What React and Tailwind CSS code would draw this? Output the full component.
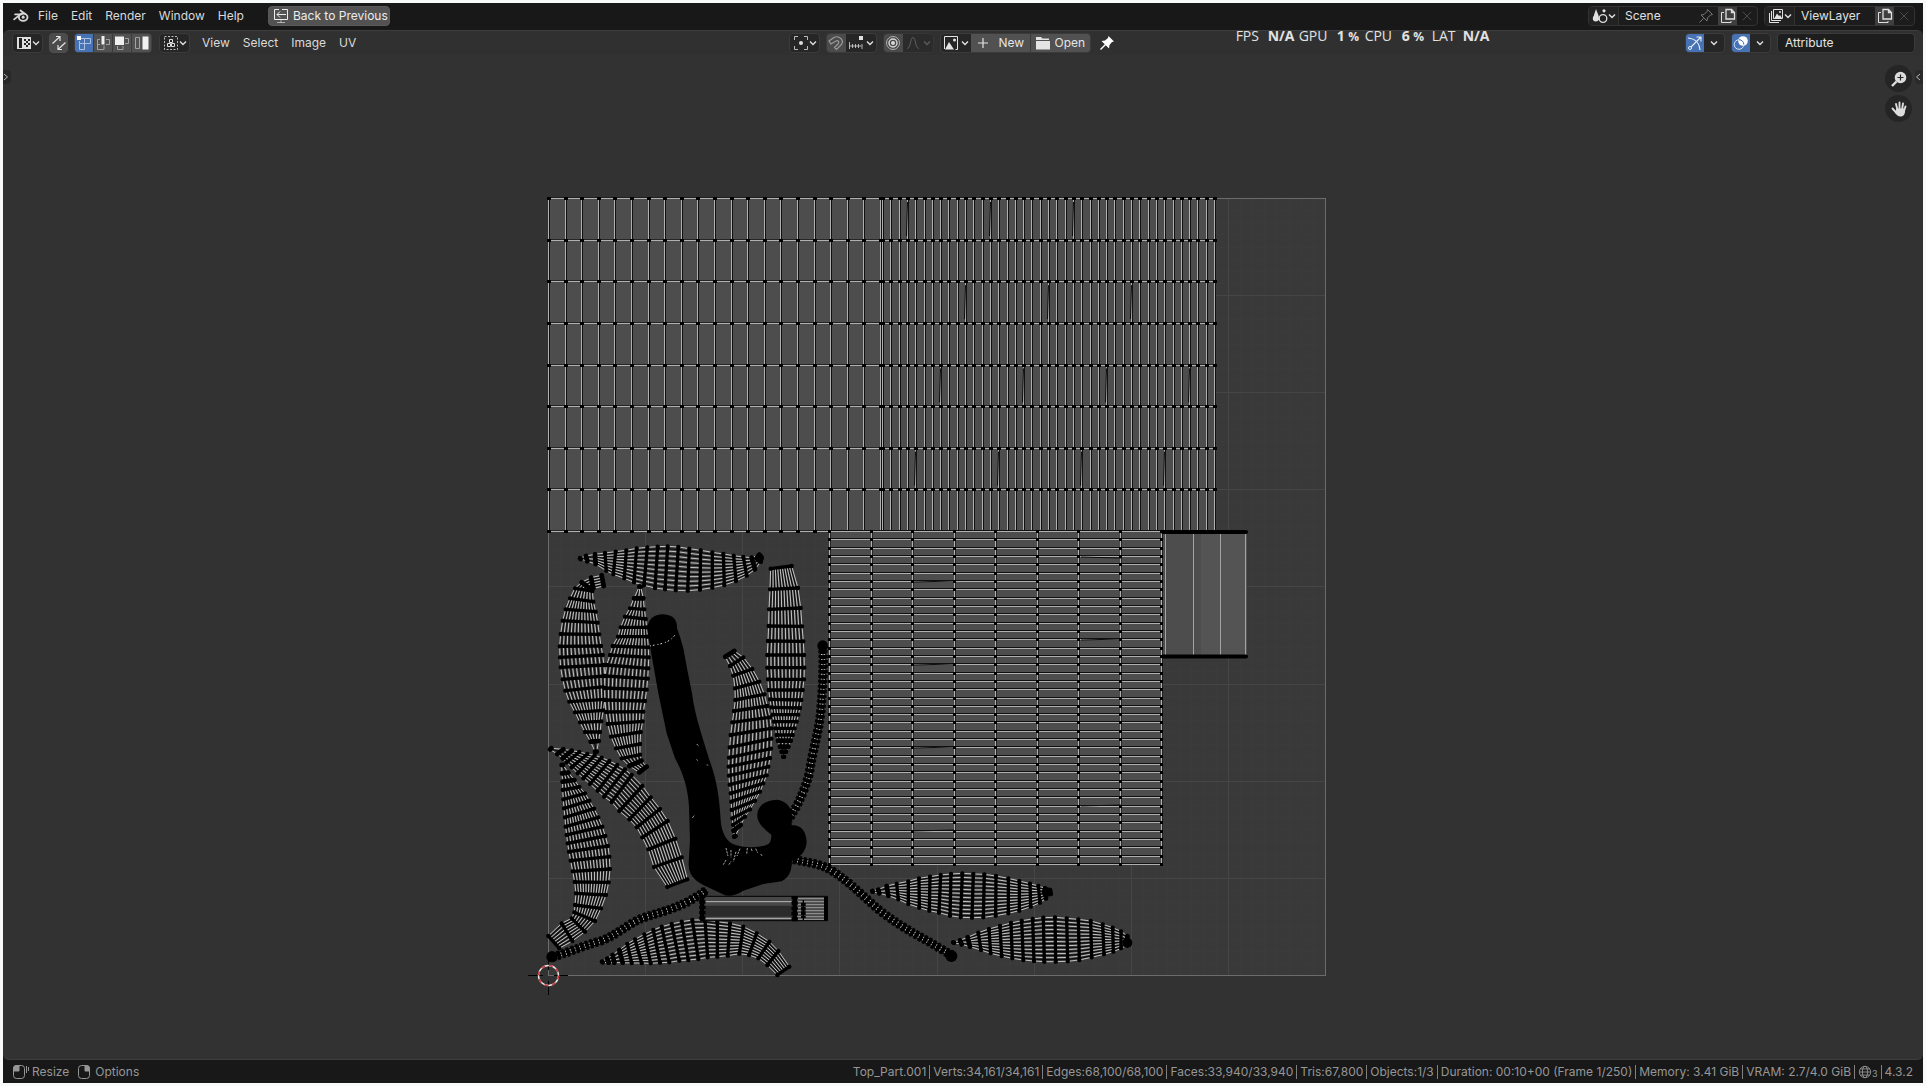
import React from "react";

/* ---------- UV mesh data: each leaf is a list of cross ribs [x1, y1, x2, y2] ---------- */

const LEAVES = [
  { dx: 0, dy: 0, n: 9, ribs: [[150,115,152,117],[168,108,172,124],[195,103,197,132],[225,99,229,152],[257,95,250,163],[289,91,283,175],[320,85,312,187],[352,82,342,196],[383,80,375,204],[413,79,405,208],[445,81,437,211],[478,86,473,212],[512,91,510,209],[547,97,547,203],[580,102,583,195],[611,107,618,183],[640,111,650,167],[665,113,675,148],[688,104,692,125]] },
  { dx: 0, dy: 0, n: 11, ribs: [[215,166,221,198],[183,173,190,205],[155,187,184,208],[135,205,187,213],[120,235,190,245],[107,268,197,275],[98,302,203,308],[92,342,208,343],[89,379,213,378],[90,412,218,405],[92,442,222,435],[98,478,224,468],[106,512,225,500],[118,545,225,538],[135,577,220,571],[150,607,214,604],[165,636,210,636],[182,665,206,663],[195,695,200,695]] },
  { dx: 0, dy: 0, n: 11, ribs: [[328,200,332,200],[312,235,340,235],[300,265,343,268],[285,290,347,297],[272,322,350,322],[264,350,352,350],[248,378,355,382],[240,405,356,412],[230,435,355,445],[225,468,353,476],[224,504,350,509],[225,540,345,543],[228,576,340,575],[233,612,338,604],[243,650,332,636],[258,685,330,672],[275,715,330,704],[298,738,334,722],[328,757,350,740]] },
  { dx: 0, dy: 0, n: 10, ribs: [[722,146,785,138],[720,208,804,204],[717,268,812,264],[716,318,816,319],[714,363,820,364],[712,405,822,405],[712,443,823,443],[714,478,822,478],[716,510,818,510],[720,538,814,540],[724,562,810,564],[728,584,805,584],[732,605,800,605],[736,625,794,625],[740,645,788,645],[744,662,782,662],[750,680,775,680],[755,695,768,695],[760,710,762,710]] },
  { dx: 0, dy: 0, n: 11, ribs: [[586,410,613,393],[600,438,640,412],[610,467,667,447],[615,505,688,485],[616,540,703,523],[612,573,712,558],[607,607,720,592],[602,645,724,625],[599,682,724,656],[597,713,723,686],[596,740,720,714],[597,767,715,740],[599,794,710,766],[602,820,700,790],[604,845,690,815],[605,870,675,842],[607,895,660,868],[609,915,645,890],[611,932,632,915],[613,950,616,948]] },
  { dx: 0, dy: 660, n: 10, ribs: [[60,28,64,25],[82,42,100,28],[98,55,125,32],[110,67,148,36],[125,82,172,42],[143,100,194,46],[160,115,215,53],[180,132,238,63],[203,152,262,75],[222,170,285,88],[245,186,305,105],[268,213,337,138],[298,238,362,172],[320,262,390,207],[337,292,413,243],[355,328,436,296],[372,381,455,352],[412,441,472,418]] },
  { dx: 0, dy: 660, n: 12, ribs: [[95,75,99,75],[96,100,115,98],[98,125,133,120],[98,150,148,141],[100,178,165,160],[102,205,178,182],[105,232,192,206],[107,260,205,232],[110,285,217,260],[113,310,226,288],[117,335,234,318],[122,362,238,350],[128,394,240,387],[134,426,236,427],[138,460,228,465],[135,495,213,505],[133,517,195,543],[125,535,165,575],[95,550,127,603],[55,588,88,625]] },
  { dx: 0, dy: 660, n: 10, ribs: [[216,665,218,667],[232,656,236,668],[248,645,253,668],[268,630,278,668],[292,612,305,669],[315,598,335,669],[343,583,362,670],[370,570,390,668],[395,560,418,667],[425,552,448,662],[455,545,475,660],[487,540,505,657],[525,540,533,652],[562,545,562,650],[600,550,593,647],[640,560,628,641],[680,580,657,645],[718,605,685,655],[745,633,712,675],[778,680,742,705]] },
  { dx: 870, dy: 660, n: 11, ribs: [[157,453,158,455],[175,449,178,460],[200,438,205,467],[230,431,235,478],[265,424,265,492],[297,415,298,503],[330,410,328,512],[362,405,357,518],[393,402,390,527],[427,400,422,532],[460,402,456,533],[493,403,490,532],[528,408,527,527],[565,415,565,520],[598,423,598,512],[630,431,632,500],[655,438,660,488],[675,445,678,475],[690,450,692,462]] },
  { dx: 870, dy: 660, n: 11, ribs: [[400,607,402,608],[420,601,425,613],[443,592,450,620],[475,578,483,630],[507,567,512,640],[540,558,545,648],[573,549,577,655],[605,542,610,660],[638,537,642,663],[670,533,673,665],[705,532,707,665],[740,535,743,664],[775,538,778,660],[812,543,815,652],[848,553,852,643],[878,563,880,635],[903,574,903,625],[922,588,922,616]] },
];

const VINES = [
  "M67,1311 C110,1300 150,1280 215,1262 C270,1240 300,1205 350,1190 C420,1168 460,1160 530,1110",
  "M878,375 C882,440 878,500 872,580 C865,640 848,690 838,760 C818,830 800,860 775,900",
  "M790,1018 C840,1030 870,1030 905,1052 C950,1080 980,1110 1030,1155 C1080,1200 1150,1240 1180,1256 C1210,1272 1240,1292 1265,1305",
];

const range = (n) => Array.from({ length: n }, (_, i) => i);
const mix = (a, b, t) => a + (b - a) * t;
const r1 = (v) => Math.round(v * 10) / 10;
const ribLength = (r) => Math.hypot(r[2] - r[0], r[3] - r[1]);

function Leaf({ ribs, dx, dy, n }) {
  const outline =
    "M" + ribs.map((r) => `${r[0]},${r[1]}`).join("L") + "L" + [...ribs].reverse().map((r) => `${r[2]},${r[3]}`).join("L") + "Z";
  let light = "";
  let dark = "";
  for (let i = 0; i < ribs.length - 1; i++) {
    const a = ribs[i];
    const b = ribs[i + 1];
    const count = Math.max(1, Math.min(n, Math.floor((ribLength(a) + ribLength(b)) / 2 / 8)));
    for (let k = 0; k <= count; k++) {
      const seg = (t) => `M${r1(mix(a[0], a[2], t))},${r1(mix(a[1], a[3], t))}L${r1(mix(b[0], b[2], t))},${r1(mix(b[1], b[3], t))}`;
      light += seg(k / count);
      if (k < count) dark += seg((k + 0.5) / count);
    }
  }
  const line = (r) => `M${r[0]},${r[1]}L${r[2]},${r[3]}`;
  const cross = ribs.map(line).join("");
  const tips = ribs.filter((r) => ribLength(r) < 40).map(line).join("");
  const dots = ribs.map((r) => `M${r[0]},${r[1]}h.1M${r[2]},${r[3]}h.1`).join("");
  return (
    <g transform={`translate(${dx} ${dy})`} fill="none" strokeLinecap="round">
      <path d={outline} fill="#3c3c3c" />
      <path d={dark} stroke="#0c0c0c" strokeWidth="3.6" />
      <path d={light} stroke="#c4c4c4" strokeWidth="3" />
      <path d={cross} stroke="#000" strokeWidth="10" />
      <path d={tips} stroke="#000" strokeWidth="14" />
      <path d={dots} stroke="#000" strokeWidth="13" />
    </g>
  );
}

function Sheet({ x, y, w, h, cols, rows, tall }) {
  const xs = range(cols + 1).map((i) => Math.round(x + (w * i) / cols));
  const ys = range(rows + 1).map((i) => Math.round(y + (h * i) / rows));
  const vLines = xs.map((v) => `M${v + 0.5},${y}V${y + h}`).join("");
  const hLines = ys.map((v) => `M${x},${v + 0.5}H${x + w}`).join("");
  const vDark = xs.map((v) => `M${v + 1.5},${y}V${y + h}`).join("");
  const hDark = ys.map((v) => `M${x},${v - 0.5}H${x + w}`).join("");
  let dots = "";
  xs.forEach((a) => ys.forEach((b) => { dots += tall ? `M${a - 1},${b - 1}h4v3h-4z` : `M${a - 1},${b - 1}h3v3h-3z`; }));
  return (
    <g fill="none">
      <rect x={x} y={y} width={w} height={h} fill="#4d4d4d" />
      <path d={tall ? vDark : hDark} stroke="#111" />
      <path d={tall ? hDark : vDark} stroke="#1d1d1d" opacity="0.8" />
      <path d={vLines} stroke="#b0b0b0" />
      <path d={hLines} stroke="#b0b0b0" />
      <path d={dots} fill="#000" />
    </g>
  );
}

function UvCanvas() {
  const slivers = [[907,0],[990,0],[1073,0],[965,2],[1048,2],[1131,2],[940,4],[1023,4],[1106,4],[1189,4],[915,6],[998,6],[1081,6],[1164,6]];
  return (
    <svg className="h-full w-full" viewBox="3 55 1920 1004" preserveAspectRatio="xMidYMid meet" role="img" aria-label="UV layout">
      <rect x="548" y="198" width="777" height="777" fill="#393939" />
      <path d={range(63).map((i) => { const p = Math.round(((i + 1) * 777) / 64); return `M${548 + p + 0.5},198v777M548,${975 - p + 0.5}h777`; }).join("")} stroke="#3b3b3b" fill="none" />
      <path d={range(7).map((i) => { const p = Math.round(((i + 1) * 777) / 8); return `M${548 + p + 0.5},198v777M548,${975 - p + 0.5}h777`; }).join("")} stroke="#464646" fill="none" />
      <rect x="548.5" y="198.5" width="777" height="777" fill="none" stroke="#6c6c6c" />

      <Sheet x={548} y={198} w={332} h={333} cols={20} rows={8} tall />
      <Sheet x={882} y={198} w={332} h={333} cols={40} rows={8} tall />
      <path d={slivers.map(([a, r]) => `M${a + 0.5},${202 + r * 41.6}l-1,34`).join("")} stroke="#0a0a0a" fill="none" />
      <Sheet x={829} y={531} w={332} h={333} cols={8} rows={40} />
      <path d="M914,582l40,-1M1081,557l40,1M914,748l40,-1M1081,806l40,-1M914,831l40,-1M1081,640l40,-1M914,665l40,-1" stroke="#0c0c0c" fill="none" />

      <g fill="none">
        <path d="M1163,532h84v125h-84z" fill="#4d4d4d" />
        <path d="M1201,532h46v125h-46z" fill="#545454" />
        <path d="M1165.500,532v125M1193.500,532v125M1220.500,532v125M1245.500,532v125" stroke="#a3a3a3" />
        <path d="M1163,532H1246M1163,656.500H1246" stroke="#000" strokeWidth="4" strokeLinecap="round" />
      </g>

      <g transform="translate(530 520) scale(0.33333)">
        {LEAVES.map((leaf, i) => <Leaf key={i} {...leaf} />)}
        <g fill="none" strokeLinecap="butt">
          {VINES.map((d, i) => (
            <g key={i}>
              <path d={d} stroke="#000" strokeWidth="20" />
              <path d={d} stroke="#000" strokeWidth="28" strokeDasharray="9 6" />
              <path d={d} stroke="#d0d0d0" strokeWidth="13" strokeDasharray="2.4 12.6" strokeDashoffset="3" />
              <path d={d} stroke="#000" strokeWidth="3" />
            </g>
          ))}
        </g>
        <circle cx="66" cy="1310" r="17" />
        <circle cx="878" cy="377" r="16" />
        <circle cx="1264" cy="1308" r="18" />
        <circle cx="688" cy="114" r="14" />
        <circle cx="1550" cy="1117" r="15" />
        <circle cx="1792" cy="1268" r="15" />

        {/* main stem */}
        <path d="M352,330 C352,300 370,283 400,283 C430,285 442,300 441,325 L450,350 L460,385 L472,450 L486,520 C495,590 520,660 540,725 C560,780 568,830 572,900 C574,940 592,965 610,973 C640,985 700,985 718,970 C724,960 724,952 724,944 C705,930 683,910 682,890 C680,860 705,840 740,839 C765,841 785,860 785,885 L785,916 C810,914 828,930 830,965 C829,990 815,1010 786,1022 C785,1050 780,1070 755,1084 L700,1092 L640,1112 C620,1125 600,1130 585,1126 L520,1095 C490,1080 475,1060 476,1030 L480,960 L477,860 C474,800 455,750 435,715 L410,640 L385,520 L362,390 Z" />
        <path d="M360,378 C385,372 415,372 434,346" stroke="#d8d8d8" strokeWidth="3" fill="none" strokeDasharray="3 6 5 9" />
        <path d="M588,984l6,24M603,990l0,22M618,995l-8,30M630,986l-9,22M652,984l-2,20M664,986l3,10M677,986l6,12M580,1034l8,-14M597,1034l6,-10M692,1002l6,8M487,894l7,-9M500,672l6,6M500,718l3,4M531,733l3,4" stroke="#bdbdbd" strokeWidth="2.6" fill="none" strokeDasharray="7 3" />

        {/* banded strip */}
        <g fill="none">
          <path d="M512,1129H892V1202H512Z" fill="#484848" stroke="#000" strokeWidth="3" />
          <path d="M524,1157H786V1190H524Z" fill="#2b2b2b" />
          <path d="M524,1145H786M524,1195H786" stroke="#b9b9b9" strokeWidth="3" />
          <path d="M802,1136H882M802,1145H882M802,1154H882M802,1163H882M802,1172H882M802,1181H882M802,1190H882M802,1198H882" stroke="#9c9c9c" strokeWidth="3" />
          <path d="M517,1130V1202M888,1130V1202" stroke="#000" strokeWidth="12" />
          <path d="M794,1128V1204" stroke="#000" strokeWidth="14" />
          <path d="M820,1148V1194" stroke="#000" strokeWidth="14" strokeDasharray="11 2" />
          <path d="M820,1140V1200" stroke="#000" strokeWidth="4" />
          <path d="M517,1125V1204M794,1128V1204" stroke="#000" strokeWidth="19" strokeDasharray="10 6" />
        </g>
      </g>

      {/* 2D cursor */}
      <g fill="none">
        <path d="M528,975.500h15M554,975.500h14M548.500,955v15M548.500,981v14" stroke="#000" />
        <circle cx="548.500" cy="975.500" r="10" stroke="#e8e8e8" strokeWidth="1.400" />
        <circle cx="548.500" cy="975.500" r="10" stroke="#c8373a" strokeWidth="1.600" strokeDasharray="3.930 3.930" />
      </g>
    </svg>
  );
}

/* ---------- icons ---------- */

function Ico({ children, className = "size-4" }) {
  return (
    <svg viewBox="0 0 16 16" className={`${className} shrink-0`} fill="none" stroke="currentColor" strokeWidth="1" aria-hidden="true">
      {children}
    </svg>
  );
}
const Chevron = () => (
  <svg viewBox="0 0 8 8" className="size-2 shrink-0" fill="none" stroke="currentColor" strokeWidth="1.4" aria-hidden="true">
    <path d="M1 2.500 4 5.500 7 2.500" />
  </svg>
);
const BlenderLogo = () => (
  <svg viewBox="0 0 17 14" className="h-3.5 w-4 shrink-0" fill="none" stroke="#d6d6d6" aria-hidden="true">
    <path d="M1.200 10.600 8.600 4.700M2.200 5.200H9M8 1.200 12 4.400" strokeWidth="1.900" strokeLinecap="round" />
    <ellipse cx="10.800" cy="8.300" rx="4.600" ry="3.900" strokeWidth="2" />
    <circle cx="10.800" cy="8.200" r="1.600" fill="#d6d6d6" stroke="none" />
  </svg>
);
const CopyIcon = () => (
  <Ico>
    <path d="M6 1.500h5.500l3 3V11H6z M11.500 1.500v3h3" strokeWidth="1.300" />
    <path d="M4 4.500H1.500v10H11V13" />
  </Ico>
);
const XIcon = () => <Ico className="size-3"><path d="M2.500 2.500l11 11M13.500 2.500l-11 11" strokeWidth="1.300" /></Ico>;

/* ---------- controls ---------- */

function DropIcon({ label, children }) {
  return (
    <button aria-label={label} className="flex h-5 w-[31px] items-center justify-between rounded border border-[#3b3b3b] bg-[#262626] pr-0.5 pl-[3px] text-[#dedede]">
      {children}
      <Chevron />
    </button>
  );
}
const MenuItem = ({ children }) => <button className="text-[#dadada]">{children}</button>;

function DataBlock({ label, value, icon, pin, inputClass }) {
  return (
    <div className="flex h-5 overflow-hidden rounded border border-[#333] bg-[#1c1c1c] text-[#e0e0e0]">
      <button aria-label={`Browse ${label}`} className="flex w-[30px] items-center justify-between border-r border-[#333] bg-[#222] pr-1 pl-[3px]">
        {icon}
        <Chevron />
      </button>
      <input aria-label={label} defaultValue={value} className={`${inputClass} bg-transparent pl-1.5 outline-none`} />
      {pin && (
        <button aria-label="Pin scene" className="flex w-6 items-center justify-center text-[#777]">
          <Ico><path d="M9.500 1.500 14.500 6.500 12.500 7 9.500 10 9 13 3 7 6 6.500 9 3.500zM5.500 10.500 1.500 14.500" /></Ico>
        </button>
      )}
      <button aria-label={`New ${label}`} className="flex w-[19px] items-center justify-center bg-[#3f3f3f]"><CopyIcon /></button>
      <button aria-label={`Remove ${label}`} className="flex w-5 items-center justify-center text-[#4a4a4a]"><XIcon /></button>
    </div>
  );
}

function TopBar() {
  return (
    <nav aria-label="Main menu" className="flex h-[27px] shrink-0 items-center justify-between bg-[#181818] pr-2 pb-px pl-2.5">
      <div className="flex items-center">
        <button aria-label="Blender"><BlenderLogo /></button>
        <div className="ml-[9px] flex gap-[13px]">
          <MenuItem>File</MenuItem>
          <MenuItem>Edit</MenuItem>
          <MenuItem>Render</MenuItem>
          <MenuItem>Window</MenuItem>
          <MenuItem>Help</MenuItem>
        </div>
        <button className="ml-6 flex h-5 w-[122px] items-center gap-1 rounded border border-[#5a5a5a] bg-[#525252] pl-1 whitespace-nowrap text-[#ececec]">
          <Ico>
            <path d="M6 1.500H1.500v10h13v-10H9M4 6.500h9M7 3.500 4 6.500l3 3" />
            <path d="M8 11.500v3M4 14.500h8" opacity="0.6" />
          </Ico>
          Back to Previous
        </button>
      </div>
      <div className="flex gap-1.5">
        <DataBlock
          label="Scene" value="Scene" pin inputClass="w-[75px]"
          icon={<Ico><path d="M4 1 6.500 7.500 7 12 1 12 2 7z" fill="currentColor" stroke="none" /><circle cx="3.800" cy="10.500" r="3" fill="currentColor" stroke="none" /><circle cx="11" cy="10.500" r="3.800" fill="#222" strokeWidth="1.300" /><circle cx="12" cy="2.800" r="1.600" fill="currentColor" stroke="none" /></Ico>}
        />
        <DataBlock
          label="View layer" value="ViewLayer" inputClass="w-[80px]"
          icon={<Ico><path d="M1.500 5v9.500H11M3.500 3v9.500H13" /><path d="M5.500 1.500h9v9h-9z" /><path d="M6.500 10 9 5.500 11 8l1-1 2 3z" fill="currentColor" stroke="none" /><circle cx="12" cy="4" r="1" fill="currentColor" stroke="none" /></Ico>}
        />
      </div>
    </nav>
  );
}

const modeBtn = "flex h-full w-[19px] items-center justify-center border-r border-[#3a3a3a] last:border-r-0";

function EditorHeader() {
  return (
    <header className="relative flex h-6 shrink-0 items-center rounded-t-md bg-[#303030] pr-2 pl-[9px]">
      <div className="flex flex-1 items-center">
        <DropIcon label="Editor type">
          <Ico><path d="M1 2h14v12H1z" fill="currentColor" stroke="none" /><path d="M3 3h3v10H3z M8 4h2v2H8zM12 4h2v2h-2zM10 6h2v2h-2zM8 8h2v2H8zM12 8h2v2h-2zM10 10h2v2h-2z" fill="#222" stroke="none" /></Ico>
        </DropIcon>
        <button aria-label="UV sync selection" className="ml-1.5 flex h-5 w-[19px] items-center justify-center rounded border border-[#4f4f4f] bg-[#4b4b4b] text-[#e4e4e4]">
          <Ico><path d="M1.500 8.500 8.500 2M5 1.500h4v4.500M14.500 7.500 7.500 14M7 10v4.500h4" strokeWidth="1.200" /></Ico>
        </button>
        <div role="group" aria-label="UV select mode" className="ml-1.5 flex h-5 overflow-hidden rounded border border-[#3f3f3f] bg-[#515151] text-[#a2a2a2]">
          <button aria-label="Vertex" className={`${modeBtn} bg-[#4772b3]`}>
            <Ico><path d="M5 3.500h9.500v5h-11V6M8.500 3.500v11h-5v-6" stroke="#a9c0e4" /><path d="M1 1h4v4H1z" fill="#fff" stroke="none" /></Ico>
          </button>
          <button aria-label="Edge" className={modeBtn}>
            <Ico><path d="M5 4.500H2.500v10H9v-4M2.500 9.500H5M11 4.500h3.500v5H11" /><path d="M6.500 1h3v8.500h-3z" fill="#f0f0f0" stroke="none" /></Ico>
          </button>
          <button aria-label="Face" className={modeBtn}>
            <Ico><path d="M11 3.500h3.500v5H11M3.500 11v3.500H9V11" /><path d="M1 1.500h9v8.500H1z" fill="#f0f0f0" stroke="none" /></Ico>
          </button>
          <button aria-label="Island" className={modeBtn}>
            <Ico><path d="M1.500 2.500h4v11h-4z" /><path d="M8.500 1.500h6v13h-6z" fill="#f0f0f0" stroke="none" /></Ico>
          </button>
        </div>
        <div className="ml-[7px]">
          <DropIcon label="Sticky selection">
            <Ico><path d="M1.500 1.500h13v13h-13z" strokeDasharray="2 1.500" opacity="0.8" /><path d="M6.500 4.500h3v3h-3zM4.500 8.500h3v3h-3zM8.500 8.500h3v3h-3z" /></Ico>
          </DropIcon>
        </div>
        <div className="ml-3 flex gap-[13px]">
          <MenuItem>View</MenuItem>
          <MenuItem>Select</MenuItem>
          <MenuItem>Image</MenuItem>
          <MenuItem>UV</MenuItem>
        </div>
      </div>

      <div className="flex items-center gap-1.5 pr-6">
        <DropIcon label="Pivot point">
          <Ico><path d="M1.500 5V1.500H5M11 1.500h3.500V5M14.500 11v3.500H11M5 14.500H1.500V11" opacity="0.8" /><circle cx="8" cy="8" r="2" fill="currentColor" stroke="none" /></Ico>
        </DropIcon>
        <div className="flex h-5 overflow-hidden rounded border border-[#3b3b3b] bg-[#262626] text-[#e0e0e0]">
          <button aria-label="Snap" className="flex w-[19px] items-center justify-center bg-[#4b4b4b] text-[#9a9a9a]">
            <Ico><path d="M1 6 6 2.500C9 .5 14.500 3 14.500 7c0 2-2 3.500-3 4.500L8.500 14.500 6.500 12.500 10 9c2-2 0-4-2-3L3 9zM6.500 12.500 9 10" strokeWidth="1.200" /></Ico>
          </button>
          <button aria-label="Snapping options" className="flex w-[30px] items-center justify-between px-0.5">
            <Ico><path d="M1.500 7v7M14 9v5M4.500 9v4M7.500 9v4M10.500 9v4M1.500 11h12" opacity="0.75" /><path d="M11 1h4v4h-4z" fill="currentColor" stroke="none" /></Ico>
            <Chevron />
          </button>
        </div>
        <div className="flex h-5 overflow-hidden rounded border border-[#363636] bg-[#2b2b2b] text-[#5c5c5c]">
          <button aria-label="Proportional editing" className="flex w-[19px] items-center justify-center bg-[#4b4b4b] text-[#d8d8d8]">
            <Ico><circle cx="8" cy="8" r="6.500" opacity="0.7" /><circle cx="8" cy="8" r="4" strokeWidth="1.400" /><circle cx="8" cy="8" r="2" fill="currentColor" stroke="none" /></Ico>
          </button>
          <button aria-label="Falloff" className="flex w-[30px] items-center justify-between px-0.5">
            <Ico><path d="M2 13.500C6 13.500 5 2.500 8 2.500s2 11 6 11" /></Ico>
            <Chevron />
          </button>
        </div>
        <div className="flex h-5 overflow-hidden rounded border border-[#3b3b3b] bg-[#515151] text-[#e4e4e4]">
          <button aria-label="Browse image" className="flex w-[30px] items-center justify-between bg-[#262626] px-0.5">
            <Ico><path d="M1.500 14V1.500h13v13h-2" /><path d="M2 14.500 6 7l5 7.500z" fill="currentColor" stroke="none" /><circle cx="11.500" cy="5" r="1.500" fill="currentColor" stroke="none" /></Ico>
            <Chevron />
          </button>
          <button className="flex w-[60px] items-center gap-2 border-r border-[#3a3a3a] pl-1">
            <Ico><path d="M8 3v10M3 8h10" strokeWidth="1.200" /></Ico>
            New
          </button>
          <button className="flex w-[59px] items-center gap-1 pl-1">
            <Ico><path d="M1 2h5l1.500 1.500H14V5H1zM1 6h14v8.500H1z" fill="currentColor" stroke="none" /></Ico>
            Open
          </button>
        </div>
        <button aria-label="Pin image" className="ml-0.5 text-white">
          <Ico><path d="M9.500 1 15 6.500 13 7 10.500 10 10 13.500 2.500 6 6 5.500 9 3z" fill="currentColor" stroke="none" /><path d="M6.500 9.500 1.500 14.500" strokeWidth="1.400" /></Ico>
        </button>
      </div>

      <div className="flex flex-1 items-center justify-end gap-1.5">
        <div className="flex h-5 overflow-hidden rounded border border-[#3b3b3b] bg-[#262626] text-[#e0e0e0]">
          <button aria-label="Show gizmo" className="flex w-[18px] items-center justify-center bg-[#4772b3] text-[#e8effa]">
            <Ico><path d="M1 3C8 3.500 12.500 8 13 15M4 12l9.500-9.500M9.500 2h4.500v4.500" strokeWidth="1.100" /><circle cx="3" cy="13" r="1.500" /></Ico>
          </button>
          <button aria-label="Gizmo options" className="flex w-5 items-center justify-center"><Chevron /></button>
        </div>
        <div className="flex h-5 overflow-hidden rounded border border-[#3b3b3b] bg-[#262626] text-[#e0e0e0]">
          <button aria-label="Show overlays" className="flex w-[18px] items-center justify-center bg-[#4772b3] text-[#fff]">
            <Ico><circle cx="10" cy="6" r="4.800" fill="currentColor" stroke="none" /><circle cx="6" cy="9.500" r="4.800" stroke="#d7e2f5" /><path d="M6 4.700a4.800 4.800 0 0 1 4.800 4.800" stroke="#4772b3" /></Ico>
          </button>
          <button aria-label="Overlay options" className="flex w-5 items-center justify-center"><Chevron /></button>
        </div>
        <select aria-label="Active UV map" className="h-5 w-[138px] appearance-none rounded border border-[#3b3b3b] bg-[#1d1d1d] pl-[7px] text-[#e4e4e4]">
          <option>Attribute</option>
        </select>
      </div>

      <div className="absolute -top-[3px] left-[64.2%] flex items-baseline font-['Open_Sans',sans-serif] text-sm leading-4 whitespace-nowrap text-[#e2e2e2]">
        <span className="w-8">FPS</span>
        <b className="w-[31px] font-bold">N/A</b>
        <span className="w-[38px]">GPU</span>
        <b className="w-7 font-bold">1 <small className="text-xs leading-4">%</small></b>
        <span className="w-[37px]">CPU</span>
        <b className="w-[30px] font-bold">6 <small className="text-xs leading-4">%</small></b>
        <span className="w-[31px]">LAT</span>
        <b className="font-bold">N/A</b>
      </div>
    </header>
  );
}

const STATS = ["Top_Part.001", "Verts:34,161/34,161", "Edges:68,100/68,100", "Faces:33,940/33,940", "Tris:67,800", "Objects:1/3", "Duration: 00:10+00 (Frame 1/250)", "Memory: 3.41 GiB", "VRAM: 2.7/4.0 GiB"];

function StatusBar() {
  return (
    <footer className="flex h-[23px] shrink-0 items-center justify-between bg-[#181818] px-2.5 text-[#969696]">
      <div className="flex items-center gap-2">
        <span className="flex items-center gap-[3px]">
          <Ico><path d="M3.500 1.500h5a3 3 0 0 1 3 3v7a3 3 0 0 1-3 3h-5a3 3 0 0 1-3-3v-7a3 3 0 0 1 3-3z" /><path d="M.5 7V4.500a3 3 0 0 1 3-3H6V7z" fill="currentColor" /><path d="M13.500 2v7M15.500 3v4" /></Ico>
          Resize
        </span>
        <span className="flex items-center gap-0.5">
          <Ico><path d="M4.500 1.500h5a3 3 0 0 1 3 3v7a3 3 0 0 1-3 3h-5a3 3 0 0 1-3-3v-7a3 3 0 0 1 3-3z" /><path d="M12.500 7V4.500a3 3 0 0 0-3-3H8V7z" fill="currentColor" /></Ico>
          Options
        </span>
      </div>
      <div className="flex items-center whitespace-nowrap">
        {STATS.map((s) => (
          <span key={s} className="flex items-center">
            {s}
            <i className="mx-[3px] h-3.5 w-px bg-[#808080]" />
          </span>
        ))}
        <Ico className="size-3.5"><circle cx="8" cy="8" r="6.500" /><ellipse cx="8" cy="8" rx="3" ry="6.500" /><path d="M1.500 8h13M2.500 4.500h11M2.500 11.500h11" /></Ico>
        <span className="self-end text-[9px] leading-3">3</span>
        <i className="mx-[3px] h-3.5 w-px bg-[#808080]" />
        4.3.2
      </div>
    </footer>
  );
}

export default function App() {
  return (
    <div className="flex h-screen flex-col overflow-hidden bg-[#f8fbfa] p-[3px] font-['Inter',sans-serif] text-xs leading-4">
      <TopBar />
      <main className="flex min-h-0 flex-1 flex-col bg-[#181818]">
        <section aria-label="UV editor" className="flex min-h-0 flex-1 flex-col rounded-md border-y border-[#3e3e3e] bg-[#323232]">
          <EditorHeader />
          <div className="relative min-h-0 flex-1">
            <UvCanvas />
            <button aria-label="Show toolbar" className="absolute top-[15px] left-0 flex h-3.5 w-2 items-center rounded-r bg-[#292929] text-[#b5b5b5]">
              <svg viewBox="0 0 6 8" className="h-2 w-1.5" fill="none" stroke="currentColor"><path d="M1 1l3.500 3L1 7" /></svg>
            </button>
            <button aria-label="Show sidebar" className="absolute top-[15px] right-0 flex h-3.5 w-2 items-center rounded-l bg-[#292929] text-[#b5b5b5]">
              <svg viewBox="0 0 6 8" className="h-2 w-1.5" fill="none" stroke="currentColor"><path d="M5 1 1.500 4 5 7" /></svg>
            </button>
            <div className="absolute top-2.5 right-[11px] flex flex-col gap-[3px]">
              <button aria-label="Zoom" className="flex size-[27px] items-center justify-center rounded-full bg-[#252525] text-[#dcdcdc]">
                <Ico><circle cx="9.500" cy="6.500" r="5.800" fill="currentColor" stroke="none" /><path d="M5.500 10.500 1 15" strokeWidth="2.400" /><path d="M9.500 3.500v6M6.500 6.500h6" stroke="#252525" strokeWidth="1.200" /></Ico>
              </button>
              <button aria-label="Move view" className="flex size-[27px] items-center justify-center rounded-full bg-[#252525] text-[#dcdcdc]">
                <Ico><path d="M1.500 7.500 5.500 12M5 3 6.500 9M8.500 1.500V9M12 2.500 11 9M14.500 5.500 13 10" strokeWidth="1.900" strokeLinecap="round" /><path d="M5.500 7.500h8.500v3c0 3-2 5-4.500 5-2.500 0-4-1.500-5.500-4z" fill="currentColor" stroke="none" /></Ico>
              </button>
            </div>
          </div>
        </section>
      </main>
      <StatusBar />
    </div>
  );
}
